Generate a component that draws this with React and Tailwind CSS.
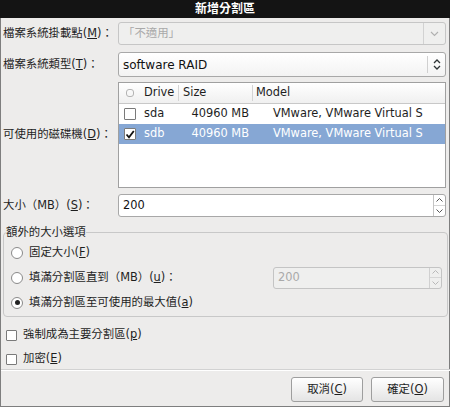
import React from "react";

function Chevron({ className = "" }) {
  return (
    <svg width="9" height="6" viewBox="0 0 9 6" className={className}>
      <path d="M1 1l3.5 3.5L8 1" fill="none" stroke="currentColor" strokeWidth="1.1" />
    </svg>
  );
}

function UpDown() {
  return (
    <svg width="8" height="11" viewBox="0 0 8 11">
      <path d="M1 4l3-3 3 3M1 7l3 3 3-3" fill="none" stroke="#2e3436" strokeWidth="1.3" />
    </svg>
  );
}

function SpinArrows({ disabled }) {
  const c = disabled ? "text-[#b8b8b8]" : "text-[#555]";
  return (
    <div className={`flex flex-col w-[12px] h-full border-l ${disabled ? "border-[#d0d0d0]" : "border-[#c4c4c4]"} ${c}`}>
      <div className="flex-1 flex items-center justify-center border-b border-[#d6d6d6]">
        <svg width="7" height="4" viewBox="0 0 7 4">
          <path d="M0.5 3.5l3-3 3 3" fill="none" stroke="currentColor" strokeWidth="1" />
        </svg>
      </div>
      <div className="flex-1 flex items-center justify-center">
        <svg width="7" height="4" viewBox="0 0 7 4">
          <path d="M0.5 0.5l3 3 3-3" fill="none" stroke="currentColor" strokeWidth="1" />
        </svg>
      </div>
    </div>
  );
}

function CheckBox({ checked, size = "w-[12px] h-[12px]" }) {
  return (
    <div className={`${size} border border-[#7a7a7a] rounded-[1px] bg-white flex items-center justify-center`}>
      {checked ? (
        <svg width="10" height="9" viewBox="0 0 10 9">
          <path d="M1.5 4.5l2.5 2.8L8.8 1" fill="none" stroke="#111" strokeWidth="1.8" />
        </svg>
      ) : null}
    </div>
  );
}

function Radio({ checked }) {
  return (
    <div className="w-[12px] h-[12px] rounded-full border border-[#8a8a8a] bg-white flex items-center justify-center">
      {checked ? <div className="w-[5px] h-[5px] rounded-full bg-[#222]" /> : null}
    </div>
  );
}

const disks = [
  { drive: "sda", size: "40960 MB", model: "VMware, VMware Virtual S", checked: false, selected: false },
  { drive: "sdb", size: "40960 MB", model: "VMware, VMware Virtual S", checked: true, selected: true },
];

export default function App() {
  return (
    <div className="w-[450px] h-[407px] flex flex-col bg-[#edeceb] text-[#1e1e1e] text-[11.4px] font-['DejaVu_Sans','Noto_Sans_CJK_TC',sans-serif] overflow-hidden">
      <div className="h-[18px] shrink-0 bg-[#141414] text-white font-bold text-[12px] flex items-center justify-center">
        新增分割區
      </div>

      <div className="flex-1 flex flex-col border-x border-b border-[#7e7e7e] pl-[2px] pr-[1px]">
        {/* mount point */}
        <div className="mt-[4px] h-[23px] flex items-center">
          <div className="w-[115px]">
            檔案系統掛載點(<u>M</u>)：
          </div>
          <div className="w-[328px] h-full flex rounded-[3px] border border-[#c6c6c6] bg-[#efefee]">
            <div className="flex-1 flex items-center pl-[4px] text-[#a9a9a9]">「不適用」</div>
            <div className="w-[22px] border-l border-[#d2d2d2] flex items-center justify-center text-[#b0b0b0]">
              <Chevron />
            </div>
          </div>
        </div>

        {/* fs type */}
        <div className="mt-[7px] h-[25px] flex items-center">
          <div className="w-[115px]">
            檔案系統類型(<u>T</u>)：
          </div>
          <div className="w-[328px] h-full flex rounded-[3px] border border-[#a8a8a8] bg-gradient-to-b from-white to-[#f3f3f3]">
            <div className="flex-1 flex items-center pl-[4px] text-[12px] text-[#111]">software RAID</div>
            <div className="my-[3px] w-[18px] border-l border-[#d0d0d0] flex items-center justify-center">
              <UpDown />
            </div>
          </div>
        </div>

        {/* disks */}
        <div className="mt-[5px] h-[106px] flex items-center">
          <div className="w-[115px]">
            可使用的磁碟機(<u>D</u>)：
          </div>
          <div className="w-[328px] h-full border border-[#a0a0a0] bg-white flex flex-col">
            <div className="h-[21px] flex items-stretch bg-gradient-to-b from-white to-[#f0f0f0] border-b border-[#c8c8c8]">
              <div className="w-[22px] flex items-center justify-center">
                <div className="w-[8px] h-[8px] rounded-[3px] border border-[#b4b4b4]" />
              </div>
              <div className="w-[38px] flex items-center pl-[3px] border-r border-[#d4d4d4] my-[2px]">Drive</div>
              <div className="w-[74px] flex items-center pl-[4px] border-r border-[#d4d4d4] my-[2px]">Size</div>
              <div className="flex-1 flex items-center pl-[3px]">Model</div>
            </div>
            {disks.map((d) => (
              <div
                key={d.drive}
                className={`h-[20px] flex items-center ${d.selected ? "bg-[#86a7d4] text-white" : "text-[#1e1e1e]"}`}
              >
                <div className="w-[22px] flex items-center justify-center">
                  <CheckBox checked={d.checked} />
                </div>
                <div className="w-[38px] pl-[3px]">{d.drive}</div>
                <div className="w-[74px] text-right pr-[4px]">{d.size}</div>
                <div className="flex-1 pl-[20px] whitespace-nowrap overflow-hidden">{d.model}</div>
              </div>
            ))}
          </div>
        </div>

        {/* size */}
        <div className="mt-[6px] h-[23px] flex items-center">
          <div className="w-[115px]">
            大小（MB）(<u>S</u>)：
          </div>
          <div className="w-[328px] h-full flex rounded-[3px] border border-[#a8a8a8] bg-white overflow-hidden">
            <div className="flex-1 flex items-center pl-[4px] text-[#111]">200</div>
            <SpinArrows />
          </div>
        </div>

        {/* additional size options */}
        <fieldset className="mt-[7px] w-[445px] border border-[#c8c8c8] rounded-[4px] pb-[1px]">
          <legend className="ml-[2px] h-[16px] leading-[16px]">額外的大小選項</legend>
          <div className="h-[25px] flex items-center pl-[7px] gap-[6px]">
            <Radio />
            <span>
              固定大小(<u>F</u>)
            </span>
          </div>
          <div className="h-[25px] flex items-center pl-[7px] gap-[6px]">
            <Radio />
            <span>
              填滿分割區直到（MB）(<u>u</u>)：
            </span>
            <div className="ml-auto mr-[5px] w-[169px] h-[22px] flex rounded-[3px] border border-[#c4c4c4] bg-[#efefee] overflow-hidden">
              <div className="flex-1 flex items-center pl-[4px] text-[#a9a9a9]">200</div>
              <SpinArrows disabled />
            </div>
          </div>
          <div className="h-[25px] flex items-center pl-[7px] gap-[6px]">
            <Radio checked />
            <span>
              填滿分割區至可使用的最大值(<u>a</u>)
            </span>
          </div>
        </fieldset>

        {/* check options */}
        <div className="mt-[7px] h-[22px] flex items-center pl-[3px] gap-[6px]">
          <CheckBox size="w-[11px] h-[11px]" />
          <span>
            強制成為主要分割區(<u>p</u>)
          </span>
        </div>
        <div className="mt-[3px] h-[20px] flex items-center pl-[3px] gap-[6px]">
          <CheckBox size="w-[11px] h-[11px]" />
          <span>
            加密(<u>E</u>)
          </span>
        </div>

        <div className="-mx-[2px] h-[1px] bg-[#d2d2d2] border-b border-white box-content" />

        {/* buttons */}
        <div className="mt-[6px] h-[25px] flex justify-end gap-[8px] pr-[4px]">
          <button className="w-[72px] h-full rounded-[3px] border border-[#9e9e9e] bg-gradient-to-b from-white to-[#e4e4e4] text-[#1e1e1e]">
            取消(<u>C</u>)
          </button>
          <button className="w-[73px] h-full rounded-[3px] border border-[#9e9e9e] bg-gradient-to-b from-white to-[#e4e4e4] text-[#1e1e1e]">
            確定(<u>O</u>)
          </button>
        </div>
      </div>
    </div>
  );
}
